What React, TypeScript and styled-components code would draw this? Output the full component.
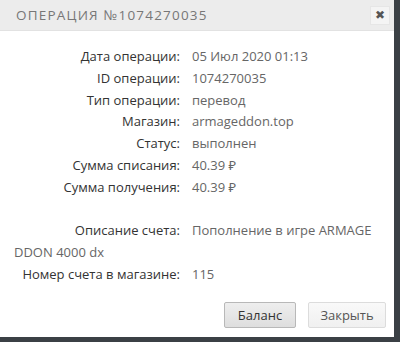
import styled, { createGlobalStyle } from 'styled-components'

const GlobalStyle = createGlobalStyle`
    html, body {
        margin: 0;
        padding: 0;
        background: #3b4045;
        width: 400px;
        height: 342px;
        overflow: hidden;
    }
`

const StyledDialog = styled.div`
    width: 394px;
    height: 337px;
    background: #fff;
    display: flex;
    flex-direction: column;
    font-family: 'Open Sans', 'Noto Sans', sans-serif;

    .header {
        height: 30px;
        background: #ececec;
        border-bottom: 1px solid #e2e2e2;
        display: flex;
        align-items: center;
        justify-content: space-between;
        padding: 0 4px 0 16px;
        .title {
            font-size: 13.5px;
            letter-spacing: 1.2px;
            color: #777;
            text-transform: uppercase;
        }
    }

    .content {
        padding: 15px 14px 0;
        font-size: 13px;
        line-height: 21.8px;
    }

    .footer {
        margin-top: auto;
        display: flex;
        justify-content: flex-end;
        gap: 12px;
        padding: 0 8px 9px;
    }
`

const CloseButton = styled.button`
    width: 20px;
    height: 19px;
    padding: 0;
    border: 1px solid #e6e6e6;
    background: #f4f4f4;
    color: #555;
    font-size: 12px;
    font-weight: 700;
    line-height: 17px;
    font-family: 'DejaVu Sans', sans-serif;
    cursor: pointer;
`

const Row = styled.div<{ $empty?: boolean }>`
    word-break: break-all;
    color: #666;
    min-height: ${({ $empty }) => ($empty ? '21.8px' : 'auto')};

    .label {
        display: inline-block;
        width: 166px;
        margin-right: 12px;
        text-align: right;
        color: #333;
        word-break: normal;
    }
`

const Button = styled.button<{ $primary?: boolean }>`
    height: 26px;
    padding: 0;
    font-family: 'Open Sans', sans-serif;
    font-size: 13px;
    border-radius: 2px;
    cursor: pointer;
    border: 1px solid ${({ $primary }) => ($primary ? '#b8b8b8' : '#dcdcdc')};
    background: ${({ $primary }) =>
        $primary ? 'linear-gradient(#eeeeee, #dedede)' : 'linear-gradient(#f9f9f9, #f0f0f0)'};
    color: ${({ $primary }) => ($primary ? '#333' : '#555')};
    width: ${({ $primary }) => ($primary ? '72px' : '78px')};
`

const rows: [string, string][] = [
    ['Дата операции:', '05 Июл 2020 01:13'],
    ['ID операции:', '1074270035'],
    ['Тип операции:', 'перевод'],
    ['Магазин:', 'armageddon.top'],
    ['Статус:', 'выполнен'],
    ['Сумма списания:', '40.39 ₽'],
    ['Сумма получения:', '40.39 ₽'],
]

export default function App() {
    return (
        <>
            <GlobalStyle />
            <StyledDialog>
                <div className="header">
                    <div className="title">Операция №1074270035</div>
                    <CloseButton>✖</CloseButton>
                </div>
                <div className="content">
                    {rows.map(([label, value]) => (
                        <Row key={label}>
                            <span className="label">{label}</span>
                            {value}
                        </Row>
                    ))}
                    <Row $empty />
                    <Row>
                        <span className="label">Описание счета:</span>
                        Пополнение в игре ARMAGEDDON 4000 dx
                    </Row>
                    <Row>
                        <span className="label">Номер счета в магазине:</span>
                        115
                    </Row>
                </div>
                <div className="footer">
                    <Button $primary>Баланс</Button>
                    <Button>Закрыть</Button>
                </div>
            </StyledDialog>
        </>
    )
}
